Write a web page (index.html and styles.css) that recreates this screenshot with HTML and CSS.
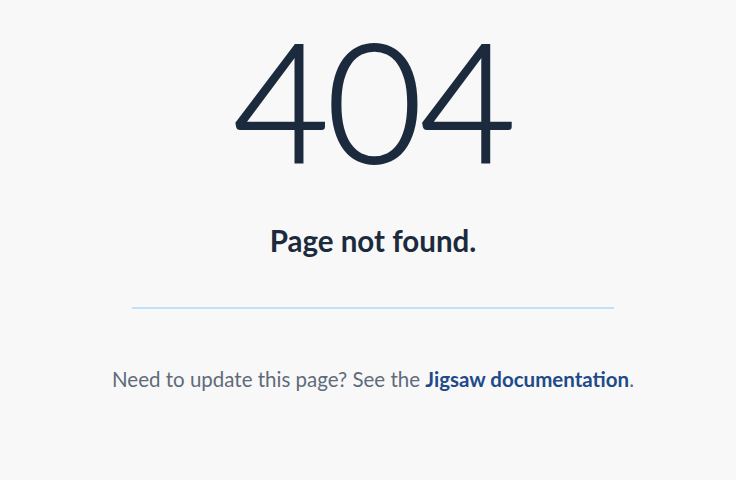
FILE: index.html
```html
<!DOCTYPE html>
<html lang="en">
<head>
<meta charset="utf-8">
<title>404</title>
<link rel="stylesheet" href="styles.css">
</head>
<body>
<main class="notfound">
  <h1 class="code">404</h1>
  <h2 class="title">Page not found.</h2>
  <hr class="rule">
  <p class="note">Need to update this page? See the <a class="link" href="#">Jigsaw documentation</a>.</p>
</main>
</body>
</html>
```
FILE: styles.css
```css
html, body {
  margin: 0;
  padding: 0;
  background: #f8f8f8;
}
body {
  font-family: "Lato", "Noto Sans", sans-serif;
  color: #1c2a3d;
}
.notfound {
  display: flex;
  flex-direction: column;
  align-items: center;
  padding-left: 10px;
  padding-top: 16px;
}
.code {
  margin: 0;
  font-size: 166px;
  font-weight: 300;
  line-height: 1;
  letter-spacing: -3px;
  -webkit-text-stroke: 2px #1c2a3d;
}
.title {
  margin: 41px 0 0;
  font-size: 29.5px;
  font-weight: 700;
  line-height: 1.2;
}
.rule {
  width: 482px;
  margin: 49px 0 0;
  border: 0;
  border-top: 2px solid #bee3f8;
  height: 0;
}
.note {
  margin: 58px 0 0;
  font-size: 20.5px;
  color: #5f6b7a;
}
.link {
  color: #1f4a8a;
  font-weight: 700;
  text-decoration: none;
}
```
